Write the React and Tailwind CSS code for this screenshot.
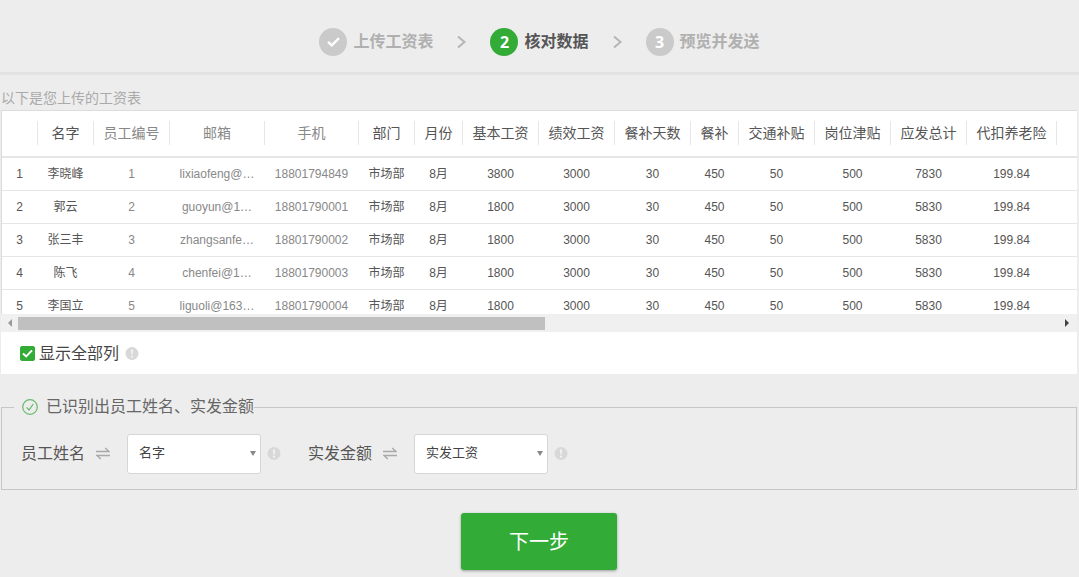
import React, { useState } from 'react';

const columns = [
    { title: '', width: 'w-9' },
    { title: '名字', width: 'w-14' },
    { title: '员工编号', width: 'w-[76px]', muted: true },
    { title: '邮箱', width: 'w-[95px]', muted: true },
    { title: '手机', width: 'w-[94px]', muted: true },
    { title: '部门', width: 'w-14' },
    { title: '月份', width: 'w-12' },
    { title: '基本工资', width: 'w-[76px]' },
    { title: '绩效工资', width: 'w-[76px]' },
    { title: '餐补天数', width: 'w-[76px]' },
    { title: '餐补', width: 'w-12' },
    { title: '交通补贴', width: 'w-[76px]' },
    { title: '岗位津贴', width: 'w-[76px]' },
    { title: '应发总计', width: 'w-[76px]' },
    { title: '代扣养老险', width: 'w-[90px]' },
];

const rows = [
    ['1', '李晓峰', '1', 'lixiaofeng@…', '18801794849', '市场部', '8月', '3800', '3000', '30', '450', '50', '500', '7830', '199.84'],
    ['2', '郭云', '2', 'guoyun@1…', '18801790001', '市场部', '8月', '1800', '3000', '30', '450', '50', '500', '5830', '199.84'],
    ['3', '张三丰', '3', 'zhangsanfe…', '18801790002', '市场部', '8月', '1800', '3000', '30', '450', '50', '500', '5830', '199.84'],
    ['4', '陈飞', '4', 'chenfei@1…', '18801790003', '市场部', '8月', '1800', '3000', '30', '450', '50', '500', '5830', '199.84'],
    ['5', '李国立', '5', 'liguoli@163…', '18801790004', '市场部', '8月', '1800', '3000', '30', '450', '50', '500', '5830', '199.84'],
];

function StepArrow() {
    return (
        <svg className="mx-6 h-[14px] w-[9px] shrink-0" viewBox="0 0 9 14" fill="none" stroke="#b5b5b5" strokeWidth="2">
            <path d="M1 1.5 L7.5 7 L1 12.5" />
        </svg>
    );
}

function Step({ mark, label, active }) {
    return (
        <li className="flex items-center gap-[6px]">
            <span
                className={`flex h-7 w-7 items-center justify-center rounded-full font-['Open_Sans',sans-serif] text-base font-bold text-white ${active ? 'bg-[#32ab37]' : 'bg-[#cacaca]'}`}
            >
                {mark}
            </span>
            <span className={`text-base font-bold ${active ? 'text-[#555]' : 'text-[#b0b0b0]'}`}>{label}</span>
        </li>
    );
}

function InfoIcon() {
    return (
        <svg className="ml-[6px] h-[14px] w-[14px] shrink-0" viewBox="0 0 14 14">
            <circle cx="7" cy="6.5" r="6.5" fill="#d8d8d8" />
            <path d="M6 2.5h2l-.3 5h-1.4z" fill="#f3f3f3" />
            <circle cx="7" cy="9.7" r="1.1" fill="#f3f3f3" />
        </svg>
    );
}

function SwapIcon() {
    return (
        <svg className="mr-[17px] ml-[11px] h-[14px] w-[14px] shrink-0" viewBox="0 0 14 14" fill="none" stroke="#a9a9a9" strokeWidth="1.4">
            <path d="M0 4.5H13L9.2 1" />
            <path d="M14 8.5H1L4.8 12" />
        </svg>
    );
}

function MatchField({ id, label, value, onChange }) {
    return (
        <div className="flex items-center">
            <label htmlFor={id} className="text-base text-[#555]">{label}</label>
            <SwapIcon />
            <div className="relative">
                <select
                    id={id}
                    value={value}
                    onChange={(e) => onChange(e.target.value)}
                    className="block h-10 w-[134px] appearance-none rounded-[3px] border border-[#d6d6d6] bg-white pr-5 pb-[2px] pl-[11px] text-[13px] text-[#444] outline-none"
                >
                    <option>名字</option>
                    <option>实发工资</option>
                </select>
                <svg className="pointer-events-none absolute top-[17px] right-[5px] h-[5px] w-[6px]" viewBox="0 0 6 5">
                    <path d="M0 0H6L3 5Z" fill="#888" />
                </svg>
            </div>
            <InfoIcon />
        </div>
    );
}

function App() {
    const [showAll, setShowAll] = useState(true);
    const [nameColumn, setNameColumn] = useState('名字');
    const [payColumn, setPayColumn] = useState('实发工资');

    return (
        <div className="min-h-screen bg-[#ededed] font-['Liberation_Sans','Noto_Sans_CJK_SC',sans-serif]">
            {/* 步骤条 */}
            <ol className="flex items-center justify-center border-b-[3px] border-[#e3e3e3] pt-7 pb-4">
                <Step
                    mark={
                        <svg className="h-[10px] w-[13px]" viewBox="0 0 13 10" fill="none" stroke="#fff" strokeWidth="2.4">
                            <path d="M1 4.8L4.8 8.3L12 1.2" />
                        </svg>
                    }
                    label="上传工资表"
                />
                <li aria-hidden="true"><StepArrow /></li>
                <Step mark="2" label="核对数据" active />
                <li aria-hidden="true"><StepArrow /></li>
                <Step mark="3" label="预览并发送" />
            </ol>

            <main className="pr-[2px] pl-px">
                <p className="pt-3 text-sm leading-[23px] text-[#aaa]">以下是您上传的工资表</p>

                {/* 工资表 */}
                <section className="bg-white">
                    <div className="h-[204px] overflow-hidden border-t border-l border-[#dcdcdc]">
                        <table className="w-full table-fixed border-separate border-spacing-0 text-center text-xs text-[#555]">
                            <thead>
                                <tr>
                                    {columns.map((col, i) => (
                                        <th
                                            key={i}
                                            className={`${col.width} h-[47px] border-b-2 border-[#e6e6e6] p-0 pb-px text-sm font-normal ${col.muted ? 'text-[#888]' : ''}`}
                                        >
                                            <div className="h-6 border-r border-[#e6e6e6] leading-6 whitespace-nowrap">{col.title}</div>
                                        </th>
                                    ))}
                                    <th className="border-b-2 border-[#e6e6e6] p-0"></th>
                                </tr>
                            </thead>
                            <tbody>
                                {rows.map((row) => (
                                    <tr key={row[0]}>
                                        {row.map((cell, i) => (
                                            <td
                                                key={i}
                                                className={`h-[33px] border-b border-[#e6e6e6] p-0 pr-px whitespace-nowrap ${columns[i].muted ? 'text-[#888]' : ''}`}
                                            >
                                                {cell}
                                            </td>
                                        ))}
                                        <td className="border-b border-[#e6e6e6] p-0"></td>
                                    </tr>
                                ))}
                            </tbody>
                        </table>
                    </div>

                    {/* 横向滚动条 */}
                    <div className="flex h-[18px] items-center bg-[#f0f0f0]">
                        <button type="button" aria-label="向左滚动" className="flex h-full w-[17px] items-center justify-center">
                            <svg className="h-2 w-1" viewBox="0 0 4 8"><path d="M4 0V8L0 4Z" fill="#9a9a9a" /></svg>
                        </button>
                        <div className="h-[13px] flex-1">
                            <div className="h-full w-[507px] max-w-full bg-[#c0c0c0] lg:w-[50.7%]"></div>
                        </div>
                        <button type="button" aria-label="向右滚动" className="flex h-full w-5 items-center justify-center">
                            <svg className="h-2 w-1" viewBox="0 0 4 8"><path d="M0 0V8L4 4Z" fill="#444" /></svg>
                        </button>
                    </div>

                    <div className="flex h-[42px] items-center pt-px pl-[19px]">
                        <label className="flex items-center gap-1 text-base text-[#444]">
                            <span className="relative">
                                <input
                                    type="checkbox"
                                    checked={showAll}
                                    onChange={(e) => setShowAll(e.target.checked)}
                                    className="block h-[15px] w-[15px] appearance-none rounded-[2px] border border-[#32ab37] checked:bg-[#32ab37]"
                                />
                                {showAll && (
                                    <svg className="pointer-events-none absolute inset-0 h-[15px] w-[15px]" viewBox="0 0 15 15" fill="none" stroke="#fff" strokeWidth="2">
                                        <path d="M3 7.5L6.2 10.4L12 4.4" />
                                    </svg>
                                )}
                            </span>
                            显示全部列
                        </label>
                        <InfoIcon />
                    </div>
                </section>

                {/* 字段匹配 */}
                <fieldset className="mt-[21px] border border-[#c6c6c6] px-[19px] pt-[15px] pb-[15px]">
                    <legend className="-ml-[7px] flex h-6 items-center gap-2 pl-2 text-base text-[#666]">
                        <svg className="h-4 w-4" viewBox="0 0 16 16" fill="none" stroke="#68b96c" strokeWidth="1.2">
                            <circle cx="8" cy="8" r="7.3" />
                            <path d="M4.6 8.4L7 11L11.2 5.2" />
                        </svg>
                        已识别出员工姓名、实发金额
                    </legend>
                    <div className="flex flex-wrap gap-[27px]">
                        <MatchField id="name-column" label="员工姓名" value={nameColumn} onChange={setNameColumn} />
                        <MatchField id="pay-column" label="实发金额" value={payColumn} onChange={setPayColumn} />
                    </div>
                </fieldset>

                <div className="flex justify-center pt-[23px] pb-[7px]">
                    <button type="button" className="h-[57px] w-[156px] rounded-[3px] bg-[#32ab37] text-xl text-white shadow-[0_1px_3px_rgba(0,0,0,0.35)]">
                        下一步
                    </button>
                </div>
            </main>
        </div>
    );
}

export default App;
